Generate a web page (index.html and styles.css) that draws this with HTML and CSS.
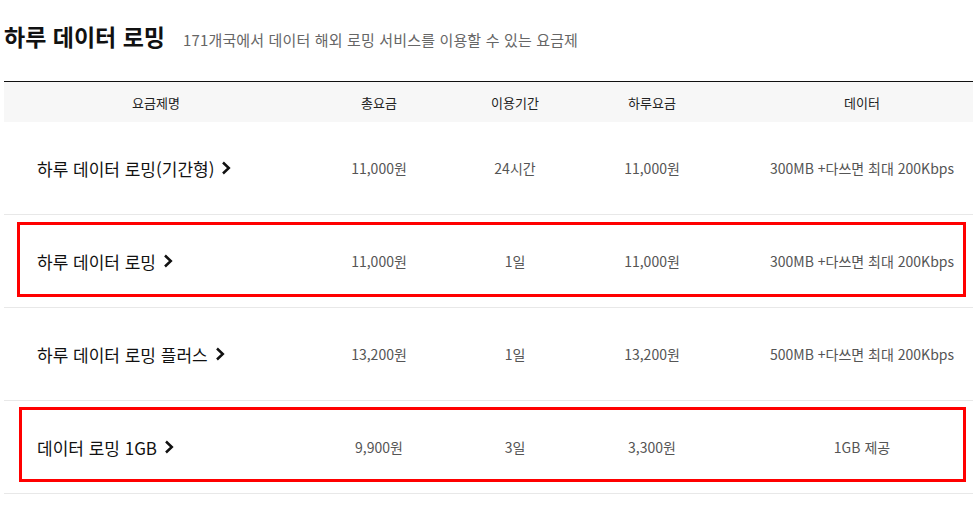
FILE: index.html
```html
<!DOCTYPE html>
<html lang="ko">
<head>
<meta charset="utf-8">
<title>하루 데이터 로밍</title>
<link rel="stylesheet" href="styles.css">
</head>
<body>
<div class="page">
  <div class="title-row">
    <h1 class="title">하루 데이터 로밍</h1>
    <p class="subtitle">171개국에서 데이터 해외 로밍 서비스를 이용할 수 있는 요금제</p>
  </div>
  <div class="table">
    <div class="row head">
      <div class="cell">요금제명</div>
      <div class="cell">총요금</div>
      <div class="cell">이용기간</div>
      <div class="cell">하루요금</div>
      <div class="cell">데이터</div>
    </div>
    <div class="row">
      <div class="cell name">하루 데이터 로밍(기간형) <svg class="chev" width="10" height="14" viewBox="0 0 10 14"><polyline points="2,1.5 7.8,7 2,12.5" fill="none" stroke="#111" stroke-width="2.5"/></svg></div>
      <div class="cell">11,000원</div>
      <div class="cell">24시간</div>
      <div class="cell">11,000원</div>
      <div class="cell">300MB +다쓰면 최대 200Kbps</div>
    </div>
    <div class="row marked">
      <div class="cell name">하루 데이터 로밍 <svg class="chev" width="10" height="14" viewBox="0 0 10 14"><polyline points="2,1.5 7.8,7 2,12.5" fill="none" stroke="#111" stroke-width="2.5"/></svg></div>
      <div class="cell">11,000원</div>
      <div class="cell">1일</div>
      <div class="cell">11,000원</div>
      <div class="cell">300MB +다쓰면 최대 200Kbps</div>
      <span class="mark"></span>
    </div>
    <div class="row">
      <div class="cell name">하루 데이터 로밍 플러스 <svg class="chev" width="10" height="14" viewBox="0 0 10 14"><polyline points="2,1.5 7.8,7 2,12.5" fill="none" stroke="#111" stroke-width="2.5"/></svg></div>
      <div class="cell">13,200원</div>
      <div class="cell">1일</div>
      <div class="cell">13,200원</div>
      <div class="cell">500MB +다쓰면 최대 200Kbps</div>
    </div>
    <div class="row marked">
      <div class="cell name">데이터 로밍 1GB <svg class="chev" width="10" height="14" viewBox="0 0 10 14"><polyline points="2,1.5 7.8,7 2,12.5" fill="none" stroke="#111" stroke-width="2.5"/></svg></div>
      <div class="cell">9,900원</div>
      <div class="cell">3일</div>
      <div class="cell">3,300원</div>
      <div class="cell">1GB 제공</div>
      <span class="mark mark-last"></span>
    </div>
  </div>
</div>
</body>
</html>
```

FILE: styles.css
```css
html, body {
  margin: 0;
  padding: 0;
  background: #fff;
}
body {
  font-family: "Noto Sans CJK KR", "Noto Sans", sans-serif;
  color: #111;
  overflow: hidden;
}
.page {
  padding-left: 4px;
  width: 969px;
  overflow: hidden;
}
.title-row {
  display: flex;
  align-items: baseline;
  gap: 18px;
  padding-top: 20px;
  height: 60px;
  box-sizing: border-box;
  margin-bottom: 21px;
}
.title {
  margin: 0;
  font-size: 23px;
  font-weight: 700;
  line-height: 32px;
  color: #111;
}
.subtitle {
  margin: 0;
  font-size: 15px;
  line-height: 22px;
  color: #666;
  letter-spacing: 0.15px;
}
.table {
  width: 996px;
  border-top: 1px solid #111;
}
.row {
  position: relative;
  display: grid;
  grid-template-columns: 304px 142px 130px 144px 276px;
  height: 92px;
  border-bottom: 1px solid #e8e8e8;
  align-items: center;
}
.row.head {
  height: 40px;
  border-bottom: none;
  background: #f7f7f7;
}
.cell {
  text-align: center;
  font-size: 14px;
  color: #555;
  white-space: nowrap;
}
.head .cell {
  font-size: 13px;
  color: #222;
}
.cell.name {
  text-align: left;
  padding-left: 33px;
  font-size: 17px;
  color: #111;
  display: flex;
  align-items: center;
  gap: 7px;
}
.chev {
  display: block;
}
.mark {
  position: absolute;
  top: 7px;
  bottom: 10px;
  left: 13px;
  right: 34px;
  border: 3px solid #ff0000;
  pointer-events: none;
}
.mark-last {
  top: 6px;
  bottom: 11px;
  left: 15px;
}
```
